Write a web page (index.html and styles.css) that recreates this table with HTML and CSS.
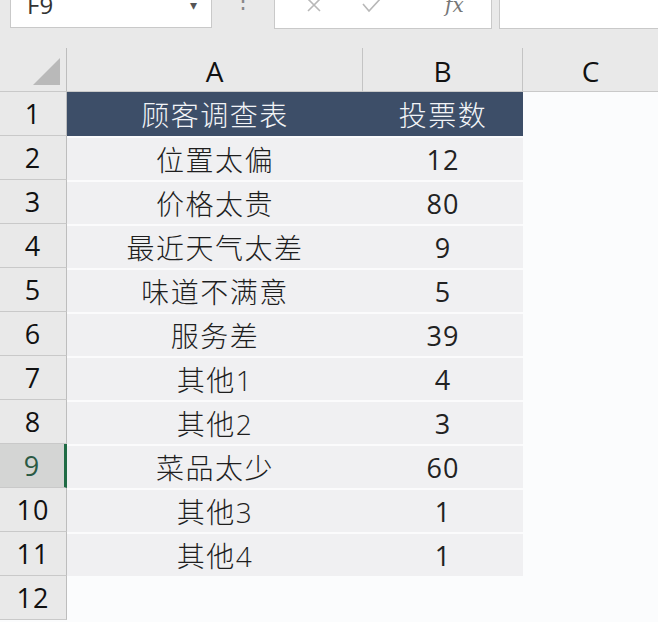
FILE: index.html
```html
<!DOCTYPE html>
<html lang="zh-CN">
<head>
<meta charset="utf-8">
<title>顾客调查表</title>
<link rel="stylesheet" href="styles.css">
</head>
<body>
<div class="toolbar">
  <div class="namebox"><span class="name">F9</span><span class="drop">▾</span></div>
  <div class="sep">⋮</div>
  <div class="fbtns">
    <svg class="ico" width="18" height="18" viewBox="0 0 18 18"><path d="M3 3 L15 15 M15 3 L3 15" stroke="#b8b8b8" stroke-width="1.6" fill="none"/></svg>
    <svg class="ico" width="22" height="18" viewBox="0 0 22 18"><path d="M2 8 L8 15 L20 2" stroke="#b8b8b8" stroke-width="1.6" fill="none"/></svg>
    <span class="fx">fx</span>
  </div>
  <div class="finput"></div>
</div>
<div class="sheet">
  <div class="corner"><div class="tri"></div></div>
  <div class="colh">A</div>
  <div class="colh">B</div>
  <div class="colh last">C</div>

  <div class="rowh">1</div><div class="hd">顾客调查表</div><div class="hd">投票数</div><div class="empty"></div>
  <div class="rowh">2</div><div class="cell">位置太偏</div><div class="cell num">12</div><div class="empty"></div>
  <div class="rowh">3</div><div class="cell">价格太贵</div><div class="cell num">80</div><div class="empty"></div>
  <div class="rowh">4</div><div class="cell">最近天气太差</div><div class="cell num">9</div><div class="empty"></div>
  <div class="rowh">5</div><div class="cell">味道不满意</div><div class="cell num">5</div><div class="empty"></div>
  <div class="rowh">6</div><div class="cell">服务差</div><div class="cell num">39</div><div class="empty"></div>
  <div class="rowh">7</div><div class="cell">其他1</div><div class="cell num">4</div><div class="empty"></div>
  <div class="rowh">8</div><div class="cell">其他2</div><div class="cell num">3</div><div class="empty"></div>
  <div class="rowh sel">9</div><div class="cell">菜品太少</div><div class="cell num">60</div><div class="empty"></div>
  <div class="rowh">10</div><div class="cell">其他3</div><div class="cell num">1</div><div class="empty"></div>
  <div class="rowh">11</div><div class="cell">其他4</div><div class="cell num">1</div><div class="empty"></div>
  <div class="rowh">12</div><div class="empty"></div><div class="empty"></div><div class="empty"></div>
</div>
</body>
</html>
```
FILE: styles.css
```css
html, body {
  margin: 0;
  padding: 0;
  background: #fbfcfd;
  overflow: hidden;
}
body {
  width: 658px;
  height: 622px;
  font-family: "Open Sans", "Noto Sans CJK SC", sans-serif;
  color: #222;
}
.toolbar {
  height: 48px;
  background: #e9e9e9;
  display: flex;
  align-items: flex-start;
  overflow: hidden;
}
.namebox {
  margin-left: 10px;
  margin-top: -20px;
  width: 202px;
  height: 48px;
  background: #fff;
  border: 1px solid #c9c9c9;
  display: flex;
  align-items: center;
  justify-content: space-between;
  box-sizing: border-box;
  padding: 0 14px 0 16px;
  font-size: 24px;
  color: #333;
}
.drop {
  font-size: 14px;
  color: #555;
}
.sep {
  width: 62px;
  text-align: center;
  margin-top: -16px;
  font-size: 22px;
  color: #888;
}
.fbtns {
  margin-top: -20px;
  width: 218px;
  height: 49px;
  box-sizing: border-box;
  background: #fff;
  border: 1px solid #c9c9c9;
  display: flex;
  align-items: center;
  padding: 0 0 0 30px;
  gap: 38px;
}
.fx {
  font-family: "DejaVu Serif", serif;
  font-style: italic;
  font-size: 20px;
  color: #777;
  margin-left: 24px;
}
.finput {
  margin-left: 7px;
  margin-top: -20px;
  flex: 1;
  height: 49px;
  background: #fff;
  border: 1px solid #c9c9c9;
  border-right: none;
  box-sizing: border-box;
}
.sheet {
  display: grid;
  grid-template-columns: 67px 296px 160px 1fr;
  grid-auto-rows: 44px;
}
.corner {
  background: #e9e9e9;
  border-right: 1px solid #bdbdbd;
  border-bottom: 1px solid #c9c9c9;
  position: relative;
}
.tri {
  position: absolute;
  left: 33px;
  top: 10px;
  width: 0;
  height: 0;
  border-style: solid;
  border-width: 0 0 27px 27px;
  border-color: transparent transparent #b9b9b9 transparent;
}
.colh {
  background: #e9e9e9;
  border-right: 1px solid #c4c4c4;
  border-bottom: 1px solid #c9c9c9;
  display: flex;
  align-items: center;
  justify-content: center;
  font-size: 28px;
  color: #111;
  padding-top: 2px;
  box-sizing: border-box;
}
.colh.last {
  border-right: none;
}
.rowh {
  background: #e9e9e9;
  border-right: 1px solid #bdbdbd;
  border-bottom: 1px solid #c9c9c9;
  display: flex;
  align-items: center;
  justify-content: center;
  font-size: 27px;
  letter-spacing: 1px;
  color: #111;
  box-sizing: border-box;
}
.rowh.sel {
  background: #d4d5d4;
  border-right: 3px solid #1f6b45;
  color: #2b5a44;
}
.hd {
  background: #3d4e68;
  color: #f2f4f7;
  display: flex;
  align-items: center;
  justify-content: center;
  font-size: 28px;
  font-weight: 300;
  letter-spacing: 1.5px;
}
.cell {
  background: #f0f0f2;
  border-top: 2px solid #fbfbfc;
  display: flex;
  align-items: center;
  justify-content: center;
  font-size: 28px;
  font-weight: 300;
  letter-spacing: 1.5px;
  color: #1e1e1e;
  box-sizing: border-box;
}
.cell.num {
  font-weight: 400;
  font-size: 27px;
  letter-spacing: 1px;
  color: #222;
}
.empty {
  background: #fbfcfd;
}
```
